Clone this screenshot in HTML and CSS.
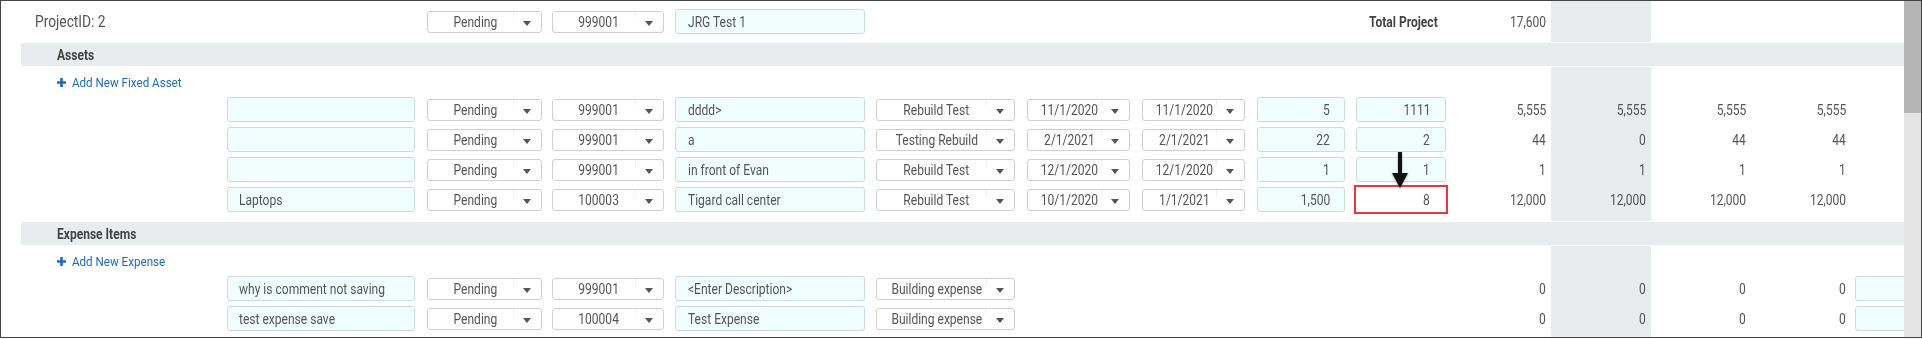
FILE: index.html
```html
<!DOCTYPE html>
<html>
<head>
<meta charset="utf-8">
<link rel="stylesheet" href="styles.css">
</head>
<body>
<div class="frame">
  <div class="main">
    <div class="head stripe">
      <div class="grid">
        <div class="lead"><span class="t l title">ProjectID: 2</span></div>
        <div></div>
        <div><div class="dd s"><span class="dd-text"><span class="t c">Pending</span></span><span class="dd-arrow"></span></div></div>
        <div><div class="dd p"><span class="dd-text"><span class="t c">999001</span></span><span class="dd-arrow"></span></div></div>
        <div><div class="in desc"><span class="t l">JRG Test 1</span></div></div>
        <div></div><div></div><div></div><div></div>
        <div class="tp"><span class="t l">Total Project</span></div>
        <div class="v"><span class="t r">17,600</span></div>
        <div></div><div></div><div></div><div></div>
      </div>
    </div>

    <div class="band"><span class="t l">Assets</span></div>

    <div class="section stripe">
      <div class="link-row">
        <svg class="plus" width="9" height="9" viewBox="0 0 9 9"><path d="M4.5 0V9M0 4.5H9" stroke="#1e6bb8" stroke-width="2.6"/></svg>
        <span class="t l">Add New Fixed Asset</span>
      </div>
      <div class="rows">
        <div class="grid">
          <div></div>
          <div><div class="in n"></div></div>
          <div><div class="dd s"><span class="dd-text"><span class="t c">Pending</span></span><span class="dd-arrow"></span></div></div>
          <div><div class="dd p"><span class="dd-text"><span class="t c">999001</span></span><span class="dd-arrow"></span></div></div>
          <div><div class="in desc"><span class="t l">dddd&gt;</span></div></div>
          <div><div class="dd c"><span class="dd-text"><span class="t c">Rebuild Test</span></span><span class="dd-arrow"></span></div></div>
          <div><div class="dd d"><span class="dd-text"><span class="t c">11/1/2020</span></span><span class="dd-arrow"></span></div></div>
          <div><div class="dd d"><span class="dd-text"><span class="t c">11/1/2020</span></span><span class="dd-arrow"></span></div></div>
          <div><div class="in num q"><span class="t r">5</span></div></div>
          <div><div class="in num cost"><span class="t r">1111</span></div></div>
          <div class="v"><span class="t r">5,555</span></div>
          <div class="v"><span class="t r">5,555</span></div>
          <div class="v"><span class="t r">5,555</span></div>
          <div class="v"><span class="t r">5,555</span></div>
          <div></div>
        </div>
        <div class="grid">
          <div></div>
          <div><div class="in n"></div></div>
          <div><div class="dd s"><span class="dd-text"><span class="t c">Pending</span></span><span class="dd-arrow"></span></div></div>
          <div><div class="dd p"><span class="dd-text"><span class="t c">999001</span></span><span class="dd-arrow"></span></div></div>
          <div><div class="in desc"><span class="t l">a</span></div></div>
          <div><div class="dd c"><span class="dd-text"><span class="t c">Testing Rebuild</span></span><span class="dd-arrow"></span></div></div>
          <div><div class="dd d"><span class="dd-text"><span class="t c">2/1/2021</span></span><span class="dd-arrow"></span></div></div>
          <div><div class="dd d"><span class="dd-text"><span class="t c">2/1/2021</span></span><span class="dd-arrow"></span></div></div>
          <div><div class="in num q"><span class="t r">22</span></div></div>
          <div><div class="in num cost"><span class="t r">2</span></div></div>
          <div class="v"><span class="t r">44</span></div>
          <div class="v"><span class="t r">0</span></div>
          <div class="v"><span class="t r">44</span></div>
          <div class="v"><span class="t r">44</span></div>
          <div></div>
        </div>
        <div class="grid">
          <div></div>
          <div><div class="in n"></div></div>
          <div><div class="dd s"><span class="dd-text"><span class="t c">Pending</span></span><span class="dd-arrow"></span></div></div>
          <div><div class="dd p"><span class="dd-text"><span class="t c">999001</span></span><span class="dd-arrow"></span></div></div>
          <div><div class="in desc"><span class="t l">in front of Evan</span></div></div>
          <div><div class="dd c"><span class="dd-text"><span class="t c">Rebuild Test</span></span><span class="dd-arrow"></span></div></div>
          <div><div class="dd d"><span class="dd-text"><span class="t c">12/1/2020</span></span><span class="dd-arrow"></span></div></div>
          <div><div class="dd d"><span class="dd-text"><span class="t c">12/1/2020</span></span><span class="dd-arrow"></span></div></div>
          <div><div class="in num q"><span class="t r">1</span></div></div>
          <div><div class="in num cost"><span class="t r">1</span></div></div>
          <div class="v"><span class="t r">1</span></div>
          <div class="v"><span class="t r">1</span></div>
          <div class="v"><span class="t r">1</span></div>
          <div class="v"><span class="t r">1</span></div>
          <div></div>
        </div>
        <div class="grid">
          <div></div>
          <div><div class="in n"><span class="t l">Laptops</span></div></div>
          <div><div class="dd s"><span class="dd-text"><span class="t c">Pending</span></span><span class="dd-arrow"></span></div></div>
          <div><div class="dd p"><span class="dd-text"><span class="t c">100003</span></span><span class="dd-arrow"></span></div></div>
          <div><div class="in desc"><span class="t l">Tigard call center</span></div></div>
          <div><div class="dd c"><span class="dd-text"><span class="t c">Rebuild Test</span></span><span class="dd-arrow"></span></div></div>
          <div><div class="dd d"><span class="dd-text"><span class="t c">10/1/2020</span></span><span class="dd-arrow"></span></div></div>
          <div><div class="dd d"><span class="dd-text"><span class="t c">1/1/2021</span></span><span class="dd-arrow"></span></div></div>
          <div><div class="in num q"><span class="t r">1,500</span></div></div>
          <div><div class="in num cost hl"><span class="t r">8</span></div></div>
          <div class="v"><span class="t r">12,000</span></div>
          <div class="v"><span class="t r">12,000</span></div>
          <div class="v"><span class="t r">12,000</span></div>
          <div class="v"><span class="t r">12,000</span></div>
          <div></div>
        </div>
      </div>
    </div>

    <div class="band"><span class="t l">Expense Items</span></div>

    <div class="section last stripe">
      <div class="link-row">
        <svg class="plus" width="9" height="9" viewBox="0 0 9 9"><path d="M4.5 0V9M0 4.5H9" stroke="#1e6bb8" stroke-width="2.6"/></svg>
        <span class="t l">Add New Expense</span>
      </div>
      <div class="rows">
        <div class="grid">
          <div></div>
          <div><div class="in n"><span class="t l">why is comment not saving</span></div></div>
          <div><div class="dd s"><span class="dd-text"><span class="t c">Pending</span></span><span class="dd-arrow"></span></div></div>
          <div><div class="dd p"><span class="dd-text"><span class="t c">999001</span></span><span class="dd-arrow"></span></div></div>
          <div><div class="in desc"><span class="t l">&lt;Enter Description&gt;</span></div></div>
          <div><div class="dd c"><span class="dd-text"><span class="t c">Building expense</span></span><span class="dd-arrow"></span></div></div>
          <div></div><div></div><div></div><div></div>
          <div class="v"><span class="t r">0</span></div>
          <div class="v"><span class="t r">0</span></div>
          <div class="v"><span class="t r">0</span></div>
          <div class="v"><span class="t r">0</span></div>
          <div><div class="in tail"></div></div>
        </div>
        <div class="grid">
          <div></div>
          <div><div class="in n"><span class="t l">test expense save</span></div></div>
          <div><div class="dd s"><span class="dd-text"><span class="t c">Pending</span></span><span class="dd-arrow"></span></div></div>
          <div><div class="dd p"><span class="dd-text"><span class="t c">100004</span></span><span class="dd-arrow"></span></div></div>
          <div><div class="in desc"><span class="t l">Test Expense</span></div></div>
          <div><div class="dd c"><span class="dd-text"><span class="t c">Building expense</span></span><span class="dd-arrow"></span></div></div>
          <div></div><div></div><div></div><div></div>
          <div class="v"><span class="t r">0</span></div>
          <div class="v"><span class="t r">0</span></div>
          <div class="v"><span class="t r">0</span></div>
          <div class="v"><span class="t r">0</span></div>
          <div><div class="in tail"></div></div>
        </div>
      </div>
    </div>
  </div>
  <div class="scrollbar"><div class="thumb"></div></div>

  <svg class="pointer" width="20" height="38" viewBox="0 0 20 38">
    <rect x="8" y="0" width="4" height="22" fill="#111"/>
    <polygon points="2,21 18,21 10,36" fill="#111"/>
  </svg>
</div>
</body>
</html>
```

FILE: styles.css
```css
* { box-sizing: border-box; }
html, body { margin: 0; padding: 0; background: #fff; }
body {
  font-family: Roboto, "Liberation Sans", sans-serif;
  font-size: 14px;
  color: #555;
}

.frame {
  position: relative;
  width: 1922px;
  height: 338px;
  border: 1px solid #444;
  display: flex;
  overflow: hidden;
}
.main {
  flex: 1;
  min-width: 0;
  display: flex;
  flex-direction: column;
  overflow: hidden;
}
.scrollbar {
  width: 17px;
  flex: none;
  background: #e4e4e4;
}
.thumb {
  height: 112px;
  background: #b5b5b5;
}

.stripe {
  background: linear-gradient(to right, transparent 1550px, #e9ecef 1550px, #e9ecef 1650px, transparent 1650px);
}

.head {
  flex: none;
  height: 41px;
  display: flex;
  align-items: center;
}

.band {
  flex: none;
  height: 23px;
  margin: 1px 0 0 20px;
  padding-left: 36px;
  background: #e9ecef;
  display: flex;
  align-items: center;
  font-weight: 700;
  color: #444;
}

.section {
  flex: none;
  margin-top: 1px;
  padding-bottom: 9px;
}
.section.last {
  flex: 1;
  padding-bottom: 0;
}

.link-row {
  height: 30px;
  display: flex;
  align-items: center;
  gap: 6px;
  padding-left: 56px;
  color: #1e6bb8;
  font-size: 13.5px;
}
.plus { flex: none; }

.rows {
  display: flex;
  flex-direction: column;
  gap: 5px;
}

.grid {
  width: 100%;
  height: 25px;
  display: grid;
  grid-template-columns: 226px 200px 125px 123px 201px 151px 115px 115px 99px 95px 100px 100px 100px 100px 1fr;
  align-items: center;
}

.t {
  display: inline-block;
  white-space: nowrap;
  transform: scaleX(0.86);
}
.t.l { transform-origin: left center; }
.t.r { transform-origin: right center; }
.t.c { transform-origin: center center; }

.lead { padding-left: 34px; }
.title { font-size: 16px; }

.in {
  height: 25px;
  border: 1px solid #cadddd;
  border-radius: 3px;
  background: #f1fefe;
  display: flex;
  align-items: center;
  padding: 0 11px;
  overflow: hidden;
}
.in.num { justify-content: flex-end; padding-right: 14px; }
.in.n { width: 188px; }
.in.desc { width: 190px; padding-left: 12px; }
.in.q { width: 88px; }
.in.cost { width: 90px; padding-right: 15px; }
.in.tail { width: 80px; margin-left: 4px; }
.in.hl {
  background: #fff;
  border-color: transparent;
  border-radius: 0;
  outline: 2px solid #e8393a;
}

.dd {
  height: 22px;
  border: 1px solid #d0d0d0;
  border-radius: 3px;
  background: #fff;
  display: flex;
}
.dd.s { width: 115px; }
.dd.p { width: 112px; }
.dd.c { width: 139px; }
.dd.d { width: 103px; }
.dd-text {
  flex: 1;
  display: flex;
  align-items: center;
  justify-content: center;
  padding-left: 10px;
  overflow: hidden;
}
.dd-arrow {
  width: 28px;
  flex: none;
  display: flex;
  align-items: center;
  justify-content: center;
  padding-top: 4px;
  background: linear-gradient(to bottom, #ececec, rgba(255,255,255,0) 50%) left top / 1px 100% no-repeat;
}
.dd-arrow::after {
  content: "";
  border-left: 4px solid transparent;
  border-right: 4px solid transparent;
  border-top: 5px solid #555;
}

.v {
  text-align: right;
  padding-right: 5px;
}
.tp {
  padding-left: 13px;
  font-weight: 700;
  color: #444;
}

.pointer {
  position: absolute;
  left: 1389px;
  top: 151px;
  filter: drop-shadow(0 1px 1px rgba(0,0,0,0.35));
}
```
